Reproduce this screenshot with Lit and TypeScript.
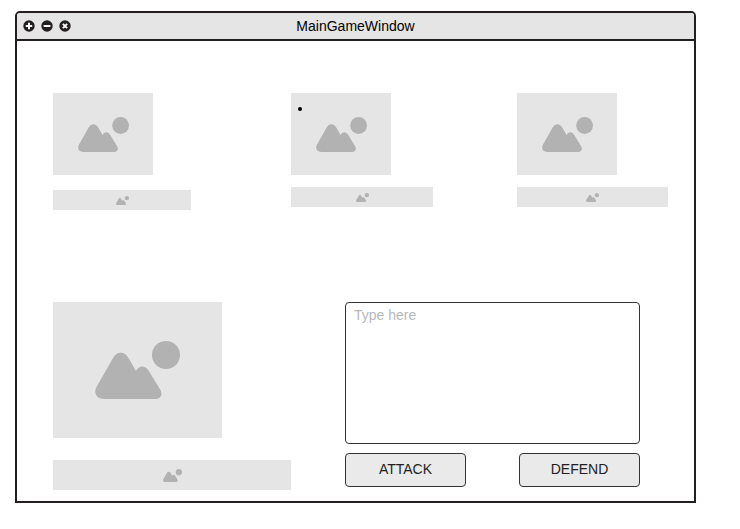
import { LitElement, html, css, svg } from "lit";
import { customElement, property } from "lit/decorators.js";

@customElement("image-placeholder")
export class ImagePlaceholder extends LitElement {
  @property({ type: String }) size: "photo" | "bar" | "large" | "wide" = "photo";

  static styles = css`
    :host {
      display: block;
    }
    .box {
      display: flex;
      align-items: center;
      justify-content: center;
      background: #e5e5e5;
    }
    .art {
      display: block;
      fill: #b2b2b2;
    }
    .photo {
      height: 82px;
    }
    .photo .art {
      width: 51px;
      height: 35px;
    }
    .bar {
      height: 20px;
    }
    .bar .art {
      width: 13px;
      height: 9px;
    }
    .large {
      height: 136px;
    }
    .large .art {
      width: 85px;
      height: 58px;
    }
    .wide {
      height: 30px;
    }
    .wide .art {
      width: 19px;
      height: 13px;
    }
  `;

  render() {
    return html`
      <div class="box ${this.size}" role="img" aria-label="Image placeholder">
        <svg class="art" viewBox="0 0 85 58" aria-hidden="true">
          <circle cx="71" cy="14" r="14" />
          <path
            d="M9 58C1 58 -1.5 51.5 1.5 46L18 17C22 10 29.5 10 33.5 17L41 30C44 24 50 24 53.5 29.5L65.5 49C68 54 65.5 58 60 58Z"
          />
        </svg>
      </div>
    `;
  }
}

const controls = [
  { label: "Add", glyph: svg`<path d="M6 2.8V9.2M2.8 6H9.2" />` },
  { label: "Minimize", glyph: svg`<path d="M2.6 6H9.4" />` },
  { label: "Close", glyph: svg`<path d="M3.9 3.9L8.1 8.1M8.1 3.9L3.9 8.1" />` },
];

@customElement("app-root")
export class AppRoot extends LitElement {
  static styles = css`
    :host {
      display: block;
      padding: 11px 44px 24px 15px;
      background: #fff;
      font: 14px/16px "Liberation Sans", Arial, sans-serif;
      color: #231f20;
    }
    * {
      box-sizing: border-box;
    }
    .window {
      border: 2px solid #231f20;
      border-radius: 5px 5px 0 0;
    }
    .titlebar {
      display: grid;
      grid-template-columns: 1fr auto 1fr;
      align-items: center;
      height: 28px;
      padding: 0 6px;
      border-bottom: 2px solid #231f20;
      border-radius: 3px 3px 0 0;
      background: #e5e5e5;
    }
    .controls {
      display: flex;
      gap: 6px;
    }
    .control {
      width: 12px;
      height: 12px;
      padding: 0;
      border: 0;
      background: none;
    }
    .icon {
      display: block;
      width: 12px;
      height: 12px;
      fill: #231f20;
    }
    .icon path {
      fill: none;
      stroke: #fff;
      stroke-width: 2;
    }
    .title {
      margin: 0;
      font-size: 14px;
      font-weight: 400;
      color: #000;
    }
    .content {
      display: grid;
      gap: 92px;
      padding: 52px 26px 11px 36px;
    }
    .enemies {
      display: grid;
      grid-template-columns: 238fr 226fr 151fr;
    }
    .enemy {
      display: flex;
      flex-direction: column;
      gap: 12px;
      position: relative;
    }
    .enemy.first {
      gap: 15px;
    }
    .portrait {
      width: 100px;
    }
    .health {
      width: 142px;
    }
    .first .health {
      width: 138px;
    }
    .last .health {
      width: 100%;
    }
    .dot {
      position: absolute;
      left: 7px;
      top: 14px;
      width: 4px;
      height: 4px;
      border-radius: 2px;
      background: #000;
    }
    .player {
      display: grid;
      grid-template-columns: 238fr 295fr;
      align-items: start;
      gap: 54px;
      padding-right: 28px;
    }
    .hero {
      display: grid;
      gap: 22px;
    }
    .hero-photo {
      width: 71%;
    }
    .actions {
      display: grid;
      gap: 9px;
    }
    .entry {
      display: block;
      width: 100%;
      height: 142px;
      padding: 4px 8px;
      border: 1px solid #333;
      border-radius: 4px;
      background: #fff;
      font: inherit;
      color: inherit;
      resize: none;
      outline: none;
    }
    .entry::placeholder {
      color: #b8b8b8;
      opacity: 1;
    }
    .buttons {
      display: flex;
      justify-content: space-between;
    }
    .button {
      width: 121px;
      height: 34px;
      padding: 0 0 2px;
      border: 1px solid #333;
      border-radius: 4px;
      background: #eaeaea;
      font: inherit;
      color: inherit;
    }
  `;

  render() {
    return html`
      <main class="window">
        <header class="titlebar">
          <div class="controls">
            ${controls.map(
              (c) => html`
                <button class="control" type="button" aria-label=${c.label}>
                  <svg class="icon" viewBox="0 0 12 12" aria-hidden="true">
                    <circle cx="6" cy="6" r="5.7" />
                    ${c.glyph}
                  </svg>
                </button>
              `
            )}
          </div>
          <h1 class="title">MainGameWindow</h1>
        </header>
        <div class="content">
          <section class="enemies">
            ${["first", "middle", "last"].map(
              (place) => html`
                <div class="enemy ${place}">
                  <image-placeholder class="portrait" size="photo"></image-placeholder>
                  <image-placeholder class="health" size="bar"></image-placeholder>
                  ${place === "middle" ? html`<span class="dot"></span>` : ""}
                </div>
              `
            )}
          </section>
          <section class="player">
            <div class="hero">
              <image-placeholder class="hero-photo" size="large"></image-placeholder>
              <image-placeholder size="wide"></image-placeholder>
            </div>
            <form class="actions" @submit=${(e: Event) => e.preventDefault()}>
              <textarea class="entry" aria-label="Command" placeholder="Type here"></textarea>
              <div class="buttons">
                <button class="button" type="button">ATTACK</button>
                <button class="button" type="button">DEFEND</button>
              </div>
            </form>
          </section>
        </div>
      </main>
    `;
  }
}
